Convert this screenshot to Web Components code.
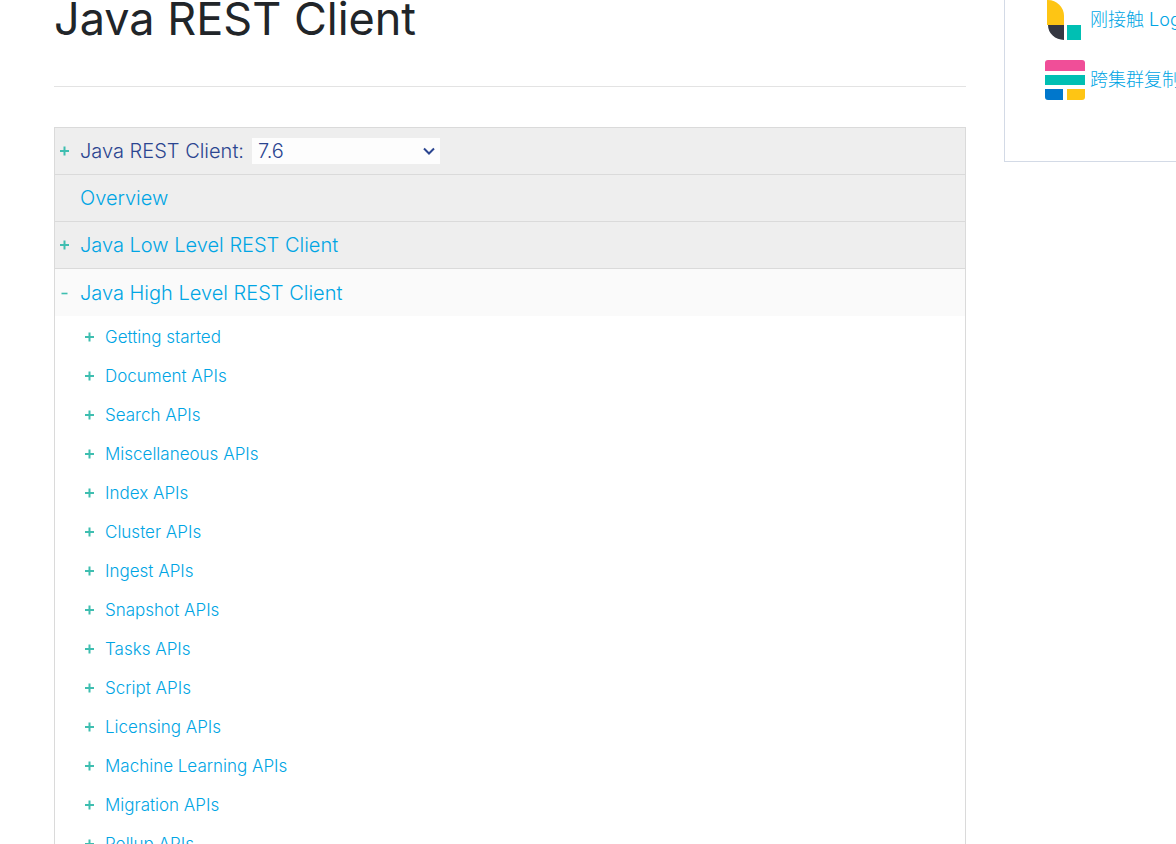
<!DOCTYPE html>
<html lang="zh-CN">
<head>
<meta charset="utf-8">
<title>Java REST Client</title>
<style>
  html, body { margin: 0; height: 100%; }
  body { overflow: hidden; background: #fff; color: #212529; font-family: Inter, "Noto Sans CJK SC", sans-serif; font-size: 18px; }
</style>
</head>
<body>
<docs-page>
  <page-title slot="main">Java REST Client</page-title>
  <docs-toc slot="main">
    <toc-row state="closed"><version-picker></version-picker></toc-row>
    <toc-row href="#overview">Overview</toc-row>
    <toc-row state="closed" href="#low">Java Low Level REST Client</toc-row>
    <toc-row state="open" href="#high">Java High Level REST Client</toc-row>
    <toc-list></toc-list>
  </docs-toc>
  <side-card slot="aside">
    <promo-link icon="logstash">刚接触 Logstash</promo-link>
    <promo-link icon="elastic">跨集群复制</promo-link>
  </side-card>
</docs-page>
<script>
const define = (name, html, setup) => customElements.define(name, class extends HTMLElement {
  connectedCallback() {
    if (this.shadowRoot) return;
    const root = this.attachShadow({ mode: 'open' });
    root.innerHTML = html;
    if (setup) setup(this, root);
  }
});

const signs = {
  closed: '<svg viewBox="0 0 10 10" width="10" height="10" aria-hidden="true"><path d="M4.500 .5v9M0 5h9" stroke="#3ebeb0" stroke-width="2"/></svg>',
  open: '<svg viewBox="0 0 10 10" width="10" height="10" aria-hidden="true"><path d="M1.500 5.5h6" stroke="#3ebeb0" stroke-width="1.6"/></svg>'
};

const logos = {
  logstash: '<svg viewBox="0 0 40 40" width="40" height="40" aria-hidden="true"><path fill="#fec514" d="M2 0h1a16 16 0 0 1 16 16v9H2z"/><path fill="#343741" d="M3 25h16v15A16 15 0 0 1 3 25z"/><path fill="#00bfb3" d="M22 25h14v15H22z"/></svg>',
  elastic: '<svg viewBox="0 0 40 40" width="40" height="40" aria-hidden="true"><path fill="#f04e98" d="M0 11V3a3 3 0 0 1 3-3h34a3 3 0 0 1 3 3v8z"/><path fill="#00bfb3" d="M0 15h40v10H0z"/><path fill="#0077cc" d="M0 29h18v11H3a3 3 0 0 1-3-3z"/><path fill="#fec514" d="M22 29h18v8a3 3 0 0 1-3 3H22z"/></svg>'
};

define('docs-page', `<style>
  :host { display: grid; grid-template-columns: minmax(0, 1fr) 172px; column-gap: 38px; padding-left: 54px; align-items: start; }
  aside { min-width: 0; }
</style><main><slot name="main"></slot></main><aside><slot name="aside"></slot></aside>`);

define('page-title', `<style>
  :host { display: block; padding-bottom: 48px; margin-bottom: 40px; border-bottom: 1px solid #e3e3e3; }
  h1 { margin: 0; font-size: 45px; line-height: 38px; font-weight: 400; }
</style><h1><slot></slot></h1>`);

define('docs-toc', `<style>
  :host { display: block; border: 1px solid #dadada; }
</style><nav><slot></slot></nav>`);

define('toc-row', `<style>
  :host { display: flex; align-items: center; box-sizing: border-box; min-height: 47px; padding-left: 5px; background: #eee; border-bottom: 1px solid #dadada; font-size: 20px; line-height: 26px; font-weight: 300; color: #2b4590; }
  :host([state="open"]) { background: #fafafa; border-bottom: 0; }
  .sign { display: flex; flex: none; width: 20px; }
  a { color: #00a5e4; text-decoration: none; }
</style><span class="sign"></span><slot></slot>`, (host, root) => {
  root.querySelector('.sign').innerHTML = signs[host.getAttribute('state')] || '';
  if (host.hasAttribute('href')) {
    const a = document.createElement('a');
    a.href = host.getAttribute('href');
    root.querySelector('slot').replaceWith(a);
    a.append(document.createElement('slot'));
  }
});

define('version-picker', `<style>
  :host { display: flex; align-items: center; gap: 8px; }
  .box { display: grid; align-items: center; width: 188px; }
  select, svg { grid-area: 1 / 1; }
  select { appearance: none; width: 100%; height: 26px; margin: 0; padding: 0 24px 0 6px; border: 0; border-radius: 0; background: #fdfdfd; color: inherit; font: inherit; }
  svg { justify-self: end; margin-right: 5px; pointer-events: none; }
</style><label for="version">Java REST Client:</label>
<span class="box"><select id="version"><option>7.6</option></select>
<svg viewBox="0 0 12 8" width="12" height="8" aria-hidden="true"><path d="M1 1.5l5 5 5-5" fill="none" stroke="#2b4590" stroke-width="2"/></svg></span>`);

define('toc-list', `<style>
  :host { display: block; }
  ul { margin: 0; padding: 1px 0 0 30px; list-style: none; }
  li { display: flex; align-items: center; height: 39px; font-size: 17px; line-height: 24px; font-weight: 300; }
  .sign { display: flex; flex: none; width: 20px; }
  a { color: #00a5e4; text-decoration: none; }
</style><ul></ul>`, (host, root) => {
  root.querySelector('ul').innerHTML = ['Getting started', 'Document APIs', 'Search APIs', 'Miscellaneous APIs', 'Index APIs', 'Cluster APIs', 'Ingest APIs', 'Snapshot APIs', 'Tasks APIs', 'Script APIs', 'Licensing APIs', 'Machine Learning APIs', 'Migration APIs', 'Rollup APIs']
    .map(t => `<li><span class="sign">${signs.closed}</span><a href="#${t.toLowerCase().replace(/ /g, '-')}">${t}</a></li>`).join('');
});

define('side-card', `<style>
  :host { display: flex; flex-direction: column; gap: 20px; padding: 0 0 61px 40px; overflow: hidden; border: solid #d3dae6; border-width: 0 0 1px 1px; }
</style><slot></slot>`);

define('promo-link', `<style>
  :host { display: block; }
  a { display: flex; align-items: center; gap: 5px; color: #00a5e4; text-decoration: none; font-size: 18px; line-height: 26px; font-weight: 300; white-space: nowrap; }
  .logo { display: flex; flex: none; }
</style><a href="#"><span class="logo"></span><span><slot></slot></span></a>`, (host, root) => {
  root.querySelector('.logo').innerHTML = logos[host.getAttribute('icon')];
});
</script>
</body>
</html>
